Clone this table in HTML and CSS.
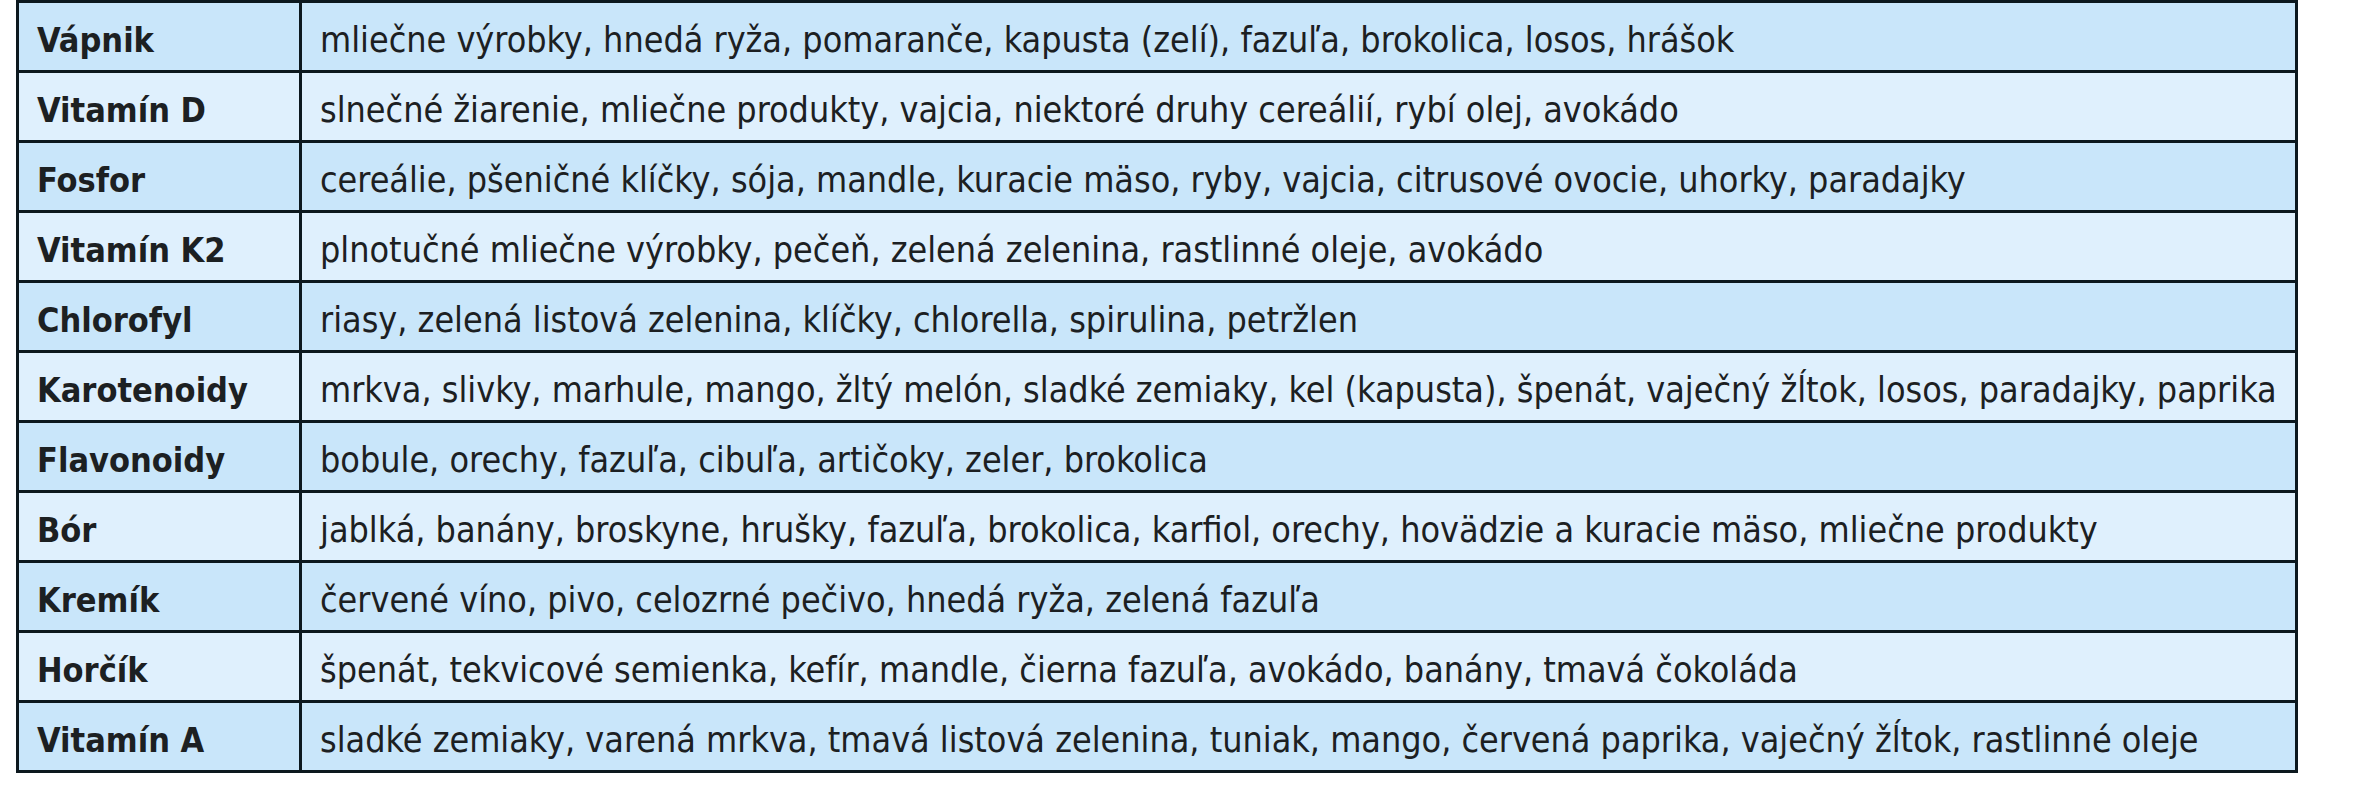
FILE: index.html
```html
<!DOCTYPE html>
<html lang="sk">
<head>
<meta charset="utf-8">
<title>Zdroje živín</title>
<link rel="stylesheet" href="styles.css">
</head>
<body>
<table class="nutrients">
<tbody>
<tr><th>Vápnik</th><td>mliečne výrobky, hnedá ryža, pomaranče, kapusta (zelí), fazuľa, brokolica, losos, hrášok</td></tr>
<tr><th>Vitamín D</th><td>slnečné žiarenie, mliečne produkty, vajcia, niektoré druhy cereálií, rybí olej, avokádo</td></tr>
<tr><th>Fosfor</th><td>cereálie, pšeničné klíčky, sója, mandle, kuracie mäso, ryby, vajcia, citrusové ovocie, uhorky, paradajky</td></tr>
<tr><th>Vitamín K2</th><td>plnotučné mliečne výrobky, pečeň, zelená zelenina, rastlinné oleje, avokádo</td></tr>
<tr><th>Chlorofyl</th><td>riasy, zelená listová zelenina, klíčky, chlorella, spirulina, petržlen</td></tr>
<tr><th>Karotenoidy</th><td>mrkva, slivky, marhule, mango, žltý melón, sladké zemiaky, kel (kapusta), špenát, vaječný žĺtok, losos, paradajky, paprika</td></tr>
<tr><th>Flavonoidy</th><td>bobule, orechy, fazuľa, cibuľa, artičoky, zeler, brokolica</td></tr>
<tr><th>Bór</th><td>jablká, banány, broskyne, hrušky, fazuľa, brokolica, karfiol, orechy, hovädzie a kuracie mäso, mliečne produkty</td></tr>
<tr><th>Kremík</th><td>červené víno, pivo, celozrné pečivo, hnedá ryža, zelená fazuľa</td></tr>
<tr><th>Horčík</th><td>špenát, tekvicové semienka, kefír, mandle, čierna fazuľa, avokádo, banány, tmavá čokoláda</td></tr>
<tr><th>Vitamín A</th><td>sladké zemiaky, varená mrkva, tmavá listová zelenina, tuniak, mango, červená paprika, vaječný žĺtok, rastlinné oleje</td></tr>
</tbody>
</table>
</body>
</html>
```

FILE: styles.css
```css
html, body {
  margin: 0;
  padding: 0;
  background: #ffffff;
}

.nutrients {
  margin-left: 16px;
  width: 2282px;
  border-collapse: separate;
  border-spacing: 0;
  border: 3px solid #0c181e;
  font-family: "DejaVu Sans Condensed", "DejaVu Sans", sans-serif;
  font-stretch: condensed;
  font-size: 35.6px;
  color: #1c2022;
  table-layout: fixed;
}

.nutrients th,
.nutrients td {
  padding: 6px 0 0 0;
  border-bottom: 3px solid #0c181e;
  vertical-align: middle;
  text-align: left;
  white-space: nowrap;
  box-sizing: border-box;
}

.nutrients tr:not(:last-child) th,
.nutrients tr:not(:last-child) td {
  height: 70px;
}

.nutrients tr:last-child th,
.nutrients tr:last-child td {
  border-bottom: 0;
  height: 67px;
}

.nutrients th {
  width: 283px;
  padding-left: 18px;
  font-size: 34px;
  font-weight: bold;
  border-right: 3px solid #0c181e;
}

.nutrients td {
  padding-left: 18px;
  font-weight: normal;
}

.nutrients tr:nth-child(odd) th,
.nutrients tr:nth-child(odd) td {
  background: #c9e6fa;
}

.nutrients tr:nth-child(even) th,
.nutrients tr:nth-child(even) td {
  background: #dff0fd;
}
```
